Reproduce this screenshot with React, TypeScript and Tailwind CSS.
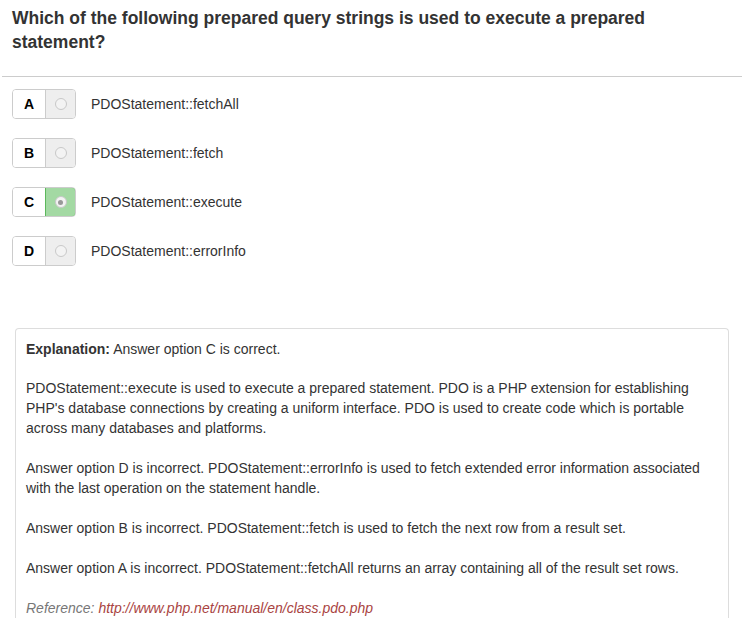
import React from "react";

const options = [
  { l: "A", t: "PDOStatement::fetchAll", sel: false },
  { l: "B", t: "PDOStatement::fetch", sel: false },
  { l: "C", t: "PDOStatement::execute", sel: true },
  { l: "D", t: "PDOStatement::errorInfo", sel: false },
];

export default function App() {
  return (
    <div className="w-[747px] h-[621px] overflow-hidden bg-white text-[#333] font-['Liberation_Sans',Arial,sans-serif]">
      <h1 className="px-[12px] pt-[6px] text-[17.5px] leading-[24px] font-bold text-[#333]">
        Which of the following prepared query strings is used to execute a prepared statement?
      </h1>
      <div className="mt-[22px] mx-[2px] w-[740px] h-px bg-[#ccc]" />
      <div className="flex flex-col gap-[19px] pt-[12px] pl-[12px]">
        {options.map((o) => (
          <div key={o.l} className="flex items-center h-[30px]">
            <div className="flex h-[30px] w-[64px] rounded-[4px] border border-[#ccc] overflow-hidden">
              <div className="w-[33px] flex items-center justify-center bg-white text-[14px] font-bold text-black border-r border-[#ccc]">
                {o.l}
              </div>
              <div
                className={
                  o.sel
                    ? "flex-1 flex items-center justify-center bg-[#a3d9a3] border border-[#5cb85c] -m-px rounded-r-[4px]"
                    : "flex-1 flex items-center justify-center bg-[#eeeeee]"
                }
              >
                <div className="w-[12px] h-[12px] rounded-full border border-[#c8c8c8] bg-[#f3f3f3] flex items-center justify-center">
                  {o.sel && <div className="w-[5px] h-[5px] rounded-full bg-[#999]" />}
                </div>
              </div>
            </div>
            <div className="ml-[15px] text-[14px] leading-[20px] text-[#333]">{o.t}</div>
          </div>
        ))}
      </div>
      <div className="mt-[62px] ml-[15px] w-[714px] rounded-t-[4px] border border-b-0 border-[#ddd] px-[10px] pt-[10px] text-[14px] leading-[20px] text-[#333]">
        <p className="mb-[19px]">
          <b>Explanation:</b> Answer option C is correct.
        </p>
        <p className="mb-[20px]">
          PDOStatement::execute is used to execute a prepared statement. PDO is a PHP extension for establishing PHP's database connections by creating a uniform interface. PDO is used to create code which is portable across many databases and platforms.
        </p>
        <p className="mb-[20px]">
          Answer option D is incorrect. PDOStatement::errorInfo is used to fetch extended error information associated with the last operation on the statement handle.
        </p>
        <p className="mb-[20px]">
          Answer option B is incorrect. PDOStatement::fetch is used to fetch the next row from a result set.
        </p>
        <p className="mb-[20px]">
          Answer option A is incorrect. PDOStatement::fetchAll returns an array containing all of the result set rows.
        </p>
        <p className="italic text-[#777]">
          Reference: <span className="text-[#a94442]">http://www.php.net/manual/en/class.pdo.php</span>
        </p>
      </div>
    </div>
  );
}
